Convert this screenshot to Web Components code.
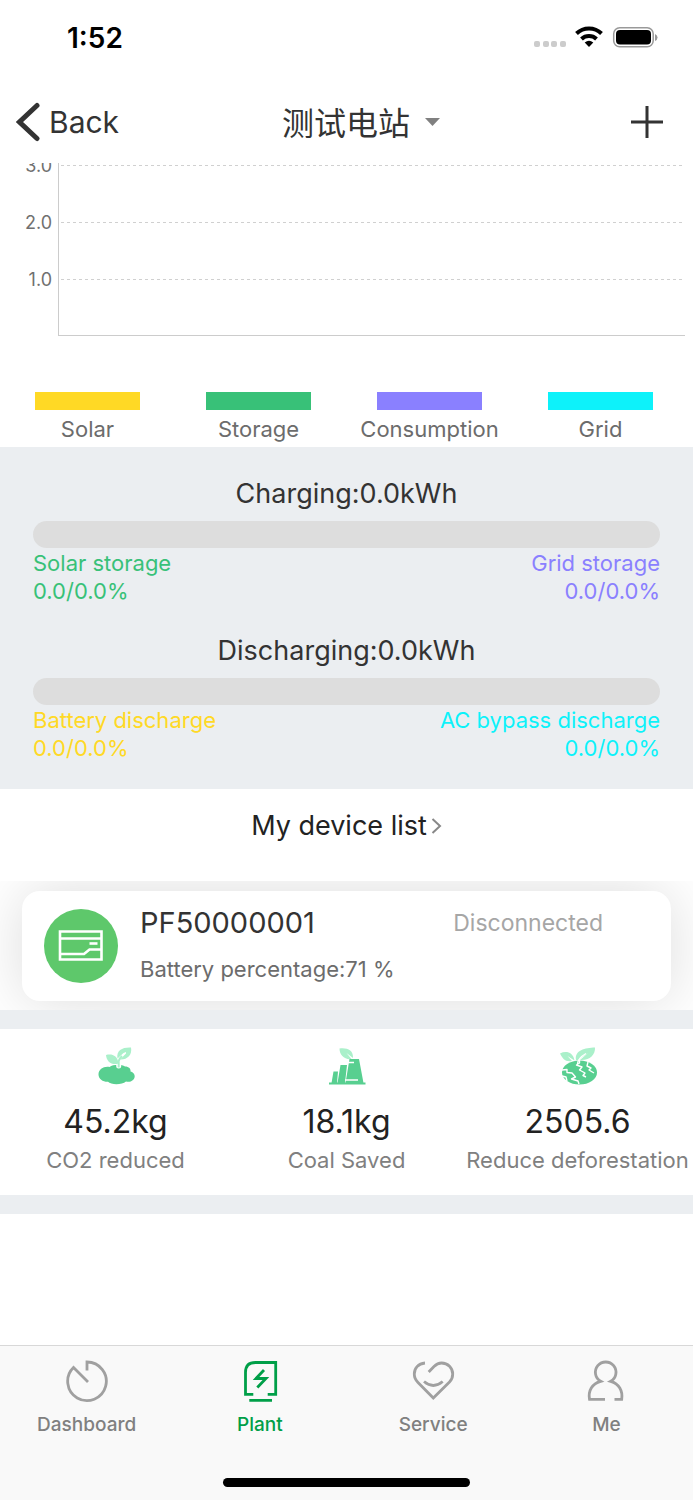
<!DOCTYPE html>
<html lang="en">
<head>
    <meta charset="UTF-8">
    <meta name="viewport" content="width=device-width, initial-scale=1.0">
    <title>Plant</title>
    <style>
        body {
            margin: 0;
            background: #fff;
            color: #333;
            font-family: Inter, "Noto Sans CJK SC", sans-serif;
        }
        plant-app {
            min-height: 100vh;
        }
    </style>
</head>
<body>
    <plant-app>
        <status-bar slot="top" time="1:52"></status-bar>
        <nav-bar slot="top" station="测试电站"></nav-bar>

        <power-chart>
            <legend-item color="#ffd925">Solar</legend-item>
            <legend-item color="#38c178">Storage</legend-item>
            <legend-item color="#8a80ff">Consumption</legend-item>
            <legend-item color="#0df2fa">Grid</legend-item>
        </power-chart>

        <energy-panel>
            <energy-meter label="Charging:0.0kWh" start-color="#38c178" end-color="#8a80ff">
                <span slot="start">Solar storage</span>
                <span slot="start">0.0/0.0%</span>
                <span slot="end">Grid storage</span>
                <span slot="end">0.0/0.0%</span>
            </energy-meter>
            <energy-meter label="Discharging:0.0kWh" start-color="#ffd925" end-color="#0df2fa">
                <span slot="start">Battery discharge</span>
                <span slot="start">0.0/0.0%</span>
                <span slot="end">AC bypass discharge</span>
                <span slot="end">0.0/0.0%</span>
            </energy-meter>
        </energy-panel>

        <device-list heading="My device list">
            <device-card>
                <span slot="name">PF50000001</span>
                <span slot="status">Disconnected</span>
                <span slot="detail">Battery percentage:71 %</span>
            </device-card>
        </device-list>

        <eco-stats>
            <eco-stat icon="co2" value="45.2kg">CO2 reduced</eco-stat>
            <eco-stat icon="coal" value="18.1kg">Coal Saved</eco-stat>
            <eco-stat icon="forest" value="2505.6">Reduce deforestation</eco-stat>
        </eco-stats>

        <tab-bar slot="bottom">
            <tab-item icon="dashboard">Dashboard</tab-item>
            <tab-item icon="plant" active>Plant</tab-item>
            <tab-item icon="service">Service</tab-item>
            <tab-item icon="me">Me</tab-item>
        </tab-bar>
    </plant-app>

    <script>
        const ecoIcons = {
            co2: `
                <path fill="#58cf90" d="M2.500 28.500C2.500 23 8 20 13.500 21C17 18 26 18 29 20.500C33 20.500 35 23 34.500 25.500C39 26.500 40 31.500 37 34C35 36 32 36 30 35.500C26 39 15 39 12 35.800C7 36 2.500 33 2.500 28.500Z"/>
                <path fill="none" stroke="#fff" stroke-width="5" stroke-linecap="round" d="M22.700 20V18"/>
                <path fill="none" stroke="#aaf0ca" stroke-width="2" d="M22.700 21.500V15C23 13 24 12 26 10"/>
                <path fill="#aaf0ca" d="M21.500 12.500C20 4 27 1 35 1.500C36.500 9 31 14 24 13.500L30 7.500V6L27.500 7Z"/>
                <path fill="#aaf0ca" d="M10 9C16 7.500 21.500 9.500 22.500 17.500C16 19.500 10.500 16 10 9Z"/>`,
            coal: `
                <path fill="#aaf0ca" d="M12.500 2.500C20 1.500 26.500 4 26 12L19.500 7L24.500 13C17.500 14 12.500 9 12.500 2.500Z"/>
                <path fill="#58cf90" d="M2 36.500H38.500V38.500H2ZM6.500 25.500H11L10 37H4.500ZM13.500 19H20L18 37H10.500ZM22.500 13H32L36.500 37H18.500Z"/>
                <path fill="none" stroke="#fff" stroke-width="1.500" d="M21 16.500H27M18 34H31"/>`,
            forest: `
                <ellipse cx="21.500" cy="26.500" rx="17.500" ry="12" fill="#58cf90"/>
                <path fill="none" stroke="#fff" stroke-width="1.400" stroke-linejoin="round" d="M21.500 14V17L18.500 19L24 21L21.500 24L27 27L25 29.500L28 31M4 24L9 23.500V26.500L14 27L17.500 31L13.500 33L20 35L21 38M4 30L8 31L9 35M30 16L29 20L33 22L31 24L36 27"/>
                <path fill="#aaf0ca" d="M2 7.500C8 4.500 15 6 16.500 14.500L9.500 10L14 15C7 16 5 13 2 7.500Z"/>
                <path fill="#aaf0ca" d="M18 14C16.500 4 27 2 37 1.500C37.500 9 31 15 22 14L30 7L20 14Z"/>
                <path fill="none" stroke="#fff" stroke-width="1.400" d="M19.500 18C19.500 14 22 11 28 7.500"/>`
        };

        const tabIcons = {
            dashboard: '<path d="M22 11.500V3A19.300 19.300 0 1 1 8.500 8.500L23 23"/>',
            plant: '<path d="M15.300 35.300H7.500V13.500Q7.500 3.500 17.500 3.500H37.700V35.300H29.700M11.300 41.300H34M26 11L18 19.500H28L19.300 28.500"/>',
            service: '<path d="M14 4C7 4.500 3.300 9.500 3.300 15C3.300 19 5 21.500 7 23.500L22.300 39L38.500 23C40.500 21 41.700 18.500 41.700 15C41.700 9 37 4 30.500 4C27.500 4 25 5.500 23 7.500L17.700 13M13 22.500Q22.300 30.500 31.700 22.500"/>',
            me: '<path d="M21 40.300H5.500C4 32 8 24.500 16.700 22.300A10.300 10.300 0 1 1 26.700 22.300C35 24.500 39 32 37.700 40.300H30.500"/>'
        };

        // Base class: every element renders its template once into an open root
        class PlantElement extends HTMLElement {
            constructor() {
                super();
                this.attachShadow({ mode: 'open' });
            }

            connectedCallback() {
                this.shadowRoot.innerHTML = this.render();
            }

            attr(name) {
                return this.getAttribute(name) || '';
            }
        }

        customElements.define('plant-app', class extends PlantElement {
            render() {
                return `
                    <style>
                        :host { display: flex; flex-direction: column; }
                        main { flex: 1; overflow: hidden; }
                    </style>
                    <header><slot name="top"></slot></header>
                    <main><slot></slot></main>
                    <slot name="bottom"></slot>`;
            }
        });

        customElements.define('status-bar', class extends PlantElement {
            render() {
                return `
                    <style>
                        :host {
                            display: flex;
                            align-items: center;
                            justify-content: space-between;
                            height: 75px;
                            padding: 0 35px 0 67px;
                            box-sizing: border-box;
                            color: #000;
                            font-size: 28px;
                            font-weight: 600;
                        }
                        svg { display: block; }
                    </style>
                    <span>${this.attr('time')}</span>
                    <svg width="124" height="24" viewBox="0 0 124 24" aria-hidden="true">
                        <g fill="#ccc">
                            <rect y="15" width="6" height="6" rx="2"/>
                            <rect x="9" y="15" width="6" height="6" rx="2"/>
                            <rect x="17" y="15" width="6" height="6" rx="2"/>
                            <rect x="26" y="15" width="6" height="6" rx="2"/>
                        </g>
                        <g fill="none" stroke="#000" stroke-width="4">
                            <path d="M42.500 7.500A18 18 0 0 1 67.500 7.500"/>
                            <path d="M47.500 13A11 11 0 0 1 62.500 13"/>
                        </g>
                        <path d="M50.700 16.500Q55 12.800 59.300 16.500L55 21Z"/>
                        <rect x="79.700" y="1.800" width="39.500" height="19" rx="6" fill="none" stroke="#999" stroke-width="1.500"/>
                        <rect x="82" y="4" width="35" height="14.500" rx="4"/>
                        <path fill="#999" d="M121 8Q123.500 9 123.500 11.500T121 15Z"/>
                    </svg>`;
            }
        });

        customElements.define('nav-bar', class extends PlantElement {
            render() {
                return `
                    <style>
                        :host {
                            display: grid;
                            grid-template-columns: 1fr auto 1fr;
                            align-items: center;
                            height: 88px;
                            padding: 5px 29px 0 16px;
                            box-sizing: border-box;
                        }
                        button, select {
                            padding: 0;
                            border: 0;
                            background: none;
                            color: inherit;
                            font: inherit;
                        }
                        svg { display: block; }
                        .back {
                            display: flex;
                            align-items: center;
                            justify-self: start;
                            gap: 8px;
                            font-size: 30px;
                            line-height: 40px;
                        }
                        .station {
                            display: flex;
                            align-items: center;
                            gap: 14px;
                            padding-left: 42px;
                        }
                        select {
                            appearance: none;
                            padding-top: 4px;
                            font-size: 32px;
                            line-height: 44px;
                        }
                        .add { justify-self: end; }
                    </style>
                    <button class="back">
                        <svg width="25" height="40" viewBox="0 0 25 40" fill="none" stroke="#333" stroke-width="5" stroke-linecap="round"><path d="M21 3.500L3.500 20L21 36.500"/></svg>
                        Back
                    </button>
                    <div class="station">
                        <select aria-label="Station"><option>${this.attr('station')}</option></select>
                        <svg width="15" height="8" viewBox="0 0 15 8" fill="#808080"><path d="M0 0H15L7.500 8Z"/></svg>
                    </div>
                    <button class="add" aria-label="Add">
                        <svg width="34" height="34" viewBox="0 0 34 34" stroke="#333" stroke-width="3"><path d="M1 17H33M17 1V33"/></svg>
                    </button>`;
            }
        });

        customElements.define('power-chart', class extends PlantElement {
            render() {
                const rows = ['3.0', '2.0', '1.0'].map(v => `<div class="row"><span>${v}</span><i></i></div>`).join('');
                return `
                    <style>
                        :host { display: block; padding: 0 0 4px; }
                        /* the axis runs on above the topmost visible grid line */
                        section {
                            padding-top: 2px;
                            background: linear-gradient(#ccc, #ccc) 58px 0 / 1px 100% no-repeat;
                        }
                        .row {
                            display: grid;
                            grid-template-columns: 52px 1fr;
                            gap: 6px;
                            height: 57px;
                            padding-right: 8px;
                        }
                        span {
                            margin-top: -9px;
                            color: #707070;
                            font-size: 18px;
                            line-height: 20px;
                            text-align: right;
                        }
                        i { background: repeating-linear-gradient(90deg, transparent 0 3px, #d0d0d0 3px 6px) top / 100% 1px no-repeat; }
                        .row:last-of-type i { border-bottom: 1px solid #ccc; }
                        .legend {
                            display: grid;
                            grid-template-columns: repeat(4, 1fr);
                            padding: 56px 7px 0 2px;
                        }
                    </style>
                    <section>${rows}</section>
                    <div class="legend"><slot></slot></div>`;
            }
        });

        customElements.define('legend-item', class extends PlantElement {
            render() {
                return `
                    <style>
                        :host {
                            display: flex;
                            flex-direction: column;
                            align-items: center;
                            gap: 5px;
                            color: #6c6c6c;
                            font-size: 22px;
                            line-height: 28px;
                        }
                        i { width: 105px; height: 18px; background: ${this.attr('color')}; }
                    </style>
                    <i></i>
                    <slot></slot>`;
            }
        });

        customElements.define('energy-panel', class extends PlantElement {
            render() {
                return `
                    <style>
                        :host {
                            display: flex;
                            flex-direction: column;
                            gap: 28px;
                            padding: 29px 33px 27px;
                            background: #ebeef1;
                        }
                    </style>
                    <slot></slot>`;
            }
        });

        customElements.define('energy-meter', class extends PlantElement {
            render() {
                return `
                    <style>
                        :host { display: block; }
                        h2 {
                            margin: 0 0 9px;
                            font-size: 27px;
                            font-weight: 400;
                            line-height: 36px;
                            text-align: center;
                        }
                        .track { height: 27px; border-radius: 14px; background: #ddd; }
                        .values {
                            display: flex;
                            justify-content: space-between;
                            margin-top: 1px;
                            font-size: 22px;
                            line-height: 28px;
                        }
                        .values div { display: flex; flex-direction: column; }
                        .start { color: ${this.attr('start-color')}; }
                        .end { align-items: flex-end; color: ${this.attr('end-color')}; }
                    </style>
                    <h2>${this.attr('label')}</h2>
                    <div class="track" role="meter" aria-valuenow="0" aria-label="${this.attr('label')}"></div>
                    <div class="values">
                        <div class="start"><slot name="start"></slot></div>
                        <div class="end"><slot name="end"></slot></div>
                    </div>`;
            }
        });

        customElements.define('device-list', class extends PlantElement {
            render() {
                return `
                    <style>
                        :host { display: block; }
                        a {
                            display: flex;
                            align-items: center;
                            justify-content: center;
                            gap: 4px;
                            padding: 19px 0 37px;
                            color: #222;
                            font-size: 27px;
                            line-height: 36px;
                            text-decoration: none;
                        }
                        .cards { padding: 10px 22px 9px; overflow: hidden; }
                    </style>
                    <a href="#devices">
                        ${this.attr('heading')}
                        <svg width="11" height="18" viewBox="0 0 11 18" fill="none" stroke="#888" stroke-width="2"><path d="M1.500 2L9 9L1.500 16"/></svg>
                    </a>
                    <div class="cards"><slot></slot></div>`;
            }
        });

        customElements.define('device-card', class extends PlantElement {
            render() {
                return `
                    <style>
                        :host {
                            display: flex;
                            align-items: center;
                            gap: 22px;
                            height: 110px;
                            padding: 0 22px;
                            border-radius: 18px;
                            background: #fff;
                            box-shadow: 0 0 60px rgba(0, 0, 0, 0.14);
                        }
                        .info {
                            flex: 1;
                            display: grid;
                            grid-template-columns: 1fr auto;
                            row-gap: 14px;
                            line-height: 32px;
                        }
                        .name { font-size: 29px; }
                        .status { padding-right: 46px; color: #a6a6a6; font-size: 23px; }
                        .detail { color: #6c6c6c; font-size: 22px; }
                    </style>
                    <svg width="74" height="74" viewBox="0 0 74 74" aria-hidden="true">
                        <circle cx="37" cy="37" r="37" fill="#5ec86b"/>
                        <g fill="none" stroke="#fff" stroke-width="2.600">
                            <path d="M16 22.500H57.500V50.500H16ZM16 29.500H57.500M16 45H40L45.500 40.500H57.500"/>
                            <path d="M45.500 34.500H53.500"/>
                        </g>
                    </svg>
                    <div class="info">
                        <div class="name"><slot name="name"></slot></div>
                        <div class="status"><slot name="status"></slot></div>
                        <div class="detail"><slot name="detail"></slot></div>
                    </div>`;
            }
        });

        customElements.define('eco-stats', class extends PlantElement {
            render() {
                return `
                    <style>
                        :host {
                            display: grid;
                            grid-template-columns: repeat(3, 1fr);
                            padding: 17px 0 21px;
                            border: solid #ebeef1;
                            border-width: 19px 0;
                        }
                    </style>
                    <slot></slot>`;
            }
        });

        customElements.define('eco-stat', class extends PlantElement {
            render() {
                return `
                    <style>
                        :host {
                            display: flex;
                            flex-direction: column;
                            align-items: center;
                            color: #808080;
                            font-size: 22px;
                            line-height: 28px;
                            white-space: nowrap;
                        }
                        strong {
                            margin: 16px 0 4px;
                            color: #222;
                            font-size: 32px;
                            font-weight: 400;
                            line-height: 40px;
                        }
                    </style>
                    <svg width="40" height="40" viewBox="0 0 40 40" aria-hidden="true">${ecoIcons[this.attr('icon')]}</svg>
                    <strong>${this.attr('value')}</strong>
                    <slot></slot>`;
            }
        });

        customElements.define('tab-bar', class extends PlantElement {
            render() {
                return `
                    <style>
                        :host {
                            display: block;
                            padding: 13px 0;
                            border-top: 1px solid #d8d8d8;
                            background: #f9f9f9;
                        }
                        nav { display: grid; grid-template-columns: repeat(4, 1fr); }
                        .home {
                            width: 247px;
                            height: 9px;
                            margin: 41px auto 0;
                            border-radius: 5px;
                            background: #000;
                        }
                    </style>
                    <nav><slot></slot></nav>
                    <div class="home"></div>`;
            }
        });

        customElements.define('tab-item', class extends PlantElement {
            render() {
                return `
                    <style>
                        :host { display: block; --icon: #a0a0a0; color: #808080; }
                        :host([active]) { --icon: #009f48; color: #009f48; }
                        a {
                            display: flex;
                            flex-direction: column;
                            align-items: center;
                            gap: 10px;
                            color: inherit;
                            font-size: 19px;
                            font-weight: 500;
                            line-height: 24px;
                            text-decoration: none;
                        }
                    </style>
                    <a href="#${this.attr('icon')}">
                        <svg width="44" height="44" viewBox="0 0 44 44" fill="none" stroke="var(--icon)" stroke-width="2.800" aria-hidden="true">${tabIcons[this.attr('icon')]}</svg>
                        <span><slot></slot></span>
                    </a>`;
            }
        });
    </script>
</body>
</html>
